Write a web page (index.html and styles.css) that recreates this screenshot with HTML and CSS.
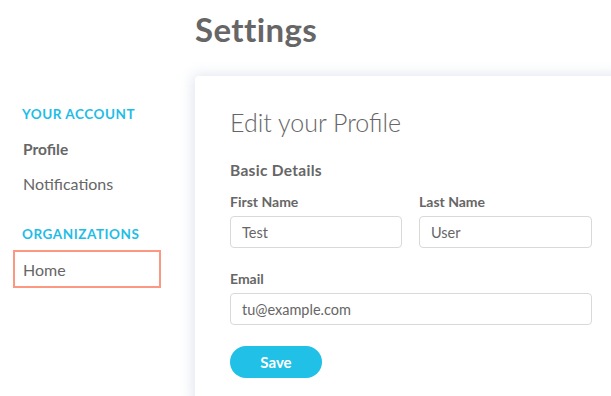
FILE: index.html
```html
<!DOCTYPE html>
<html>
<head>
<meta charset="utf-8">
<link rel="stylesheet" href="styles.css">
</head>
<body>
<div class="page">
  <aside class="sidebar">
    <div class="nav-heading nav-heading--first">YOUR ACCOUNT</div>
    <div class="nav-item nav-item--active">Profile</div>
    <div class="nav-item">Notifications</div>
    <div class="nav-heading nav-heading--second">ORGANIZATIONS</div>
    <div class="nav-item nav-item--focus">Home</div>
  </aside>
  <main class="main">
    <h1 class="page-title">Settings</h1>
    <section class="card">
      <h2 class="card-title">Edit your Profile</h2>
      <h3 class="section-title">Basic Details</h3>
      <div class="row">
        <label class="field">
          <span class="field-label">First Name</span>
          <span class="input">Test</span>
        </label>
        <label class="field">
          <span class="field-label">Last Name</span>
          <span class="input">User</span>
        </label>
      </div>
      <label class="field field--email">
        <span class="field-label">Email</span>
        <span class="input">tu@example.com</span>
      </label>
      <button class="btn-save">Save</button>
    </section>
  </main>
</div>
</body>
</html>
```
FILE: styles.css
```css
html, body {
  margin: 0;
  padding: 0;
  background: #ffffff;
  overflow: hidden;
}
body {
  font-family: Lato, "Noto Sans", sans-serif;
  color: #666666;
  width: 611px;
  height: 396px;
}
.page {
  display: grid;
  grid-template-columns: 195px 432px;
}
.sidebar {
  display: flex;
  flex-direction: column;
  padding: 105px 0 0 13px;
}
.nav-heading {
  font-size: 13.5px;
  font-weight: 700;
  color: #1fbde6;
  line-height: 18px;
  padding-left: 9px;
  letter-spacing: 0.55px;
}
.nav-heading--first { margin-bottom: 9px; }
.nav-heading--second { margin-top: 24px; margin-bottom: 7px; }
.nav-item {
  box-sizing: border-box;
  width: 148px;
  height: 35px;
  display: flex;
  align-items: center;
  padding-left: 8px;
  border: 2px solid transparent;
  font-size: 16px;
  color: #666666;
}
.nav-item--active {
  font-weight: 700;
  font-size: 15.5px;
  height: 34px;
}
.nav-item--focus {
  height: 38px;
  border-color: #fc9782;
}
.main {
  display: flex;
  flex-direction: column;
}
.page-title {
  margin: 0;
  padding: 9px 0 0 0px;
  height: 76px;
  box-sizing: border-box;
  font-size: 33px;
  line-height: 40px;
  font-weight: 700;
  color: #666666;
  letter-spacing: 0.4px;
}
.card {
  background: #ffffff;
  border-radius: 4px;
  box-shadow: -2px -1px 14px rgba(160, 170, 200, 0.32);
  padding: 31px 35px 20px 35px;
  height: 330px;
  box-sizing: border-box;
}
.card-title {
  margin: 0;
  font-size: 25px;
  line-height: 30px;
  font-weight: 300;
  color: #666666;
}
.section-title {
  margin: 23px 0 0 0;
  font-size: 15.5px;
  line-height: 20px;
  font-weight: 700;
  color: #666666;
  letter-spacing: 0.3px;
}
.row {
  display: grid;
  grid-template-columns: 172px 173px;
  column-gap: 17px;
  margin-top: 13px;
}
.field {
  display: flex;
  flex-direction: column;
}
.field-label {
  font-size: 14px;
  line-height: 18px;
  font-weight: 700;
  color: #666666;
  margin-bottom: 5px;
}
.input {
  box-sizing: border-box;
  height: 32px;
  border: 1px solid #d9d9d9;
  border-radius: 4px;
  padding: 0 11px;
  display: flex;
  align-items: center;
  font-size: 14.5px;
  color: #666666;
}
.field--email {
  margin-top: 22px;
  width: 362px;
}
.btn-save {
  margin-top: 21px;
  width: 92px;
  height: 32px;
  border: none;
  border-radius: 16px;
  background: #20c0e7;
  color: #ffffff;
  font-family: Lato, "Noto Sans", sans-serif;
  font-size: 15px;
  font-weight: 700;
  padding: 0;
}
```
